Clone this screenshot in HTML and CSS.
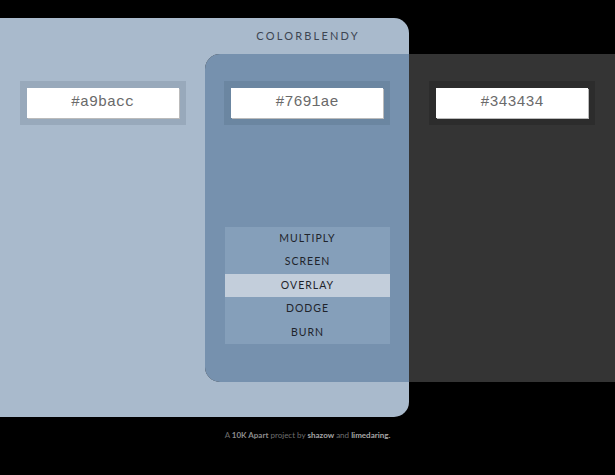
FILE: index.html
```html
<!DOCTYPE html>
<html lang="en">
<head>
    <meta charset="UTF-8">
    <title>ColorBlendy</title>
    <link rel="stylesheet" href="styles.css">
</head>
<body>
    <div class="stage">
        <div class="square light"></div>
        <div class="square dark"></div>
        <div class="square mix">
            <ul class="modes">
                <li>Multiply</li>
                <li>Screen</li>
                <li class="active">Overlay</li>
                <li>Dodge</li>
                <li>Burn</li>
            </ul>
        </div>

        <h1 class="title">ColorBlendy</h1>

        <div class="swatch swatch-light"><div class="code">#a9bacc</div></div>
        <div class="swatch swatch-mix"><div class="code">#7691ae</div></div>
        <div class="swatch swatch-dark"><div class="code">#343434</div></div>
    </div>

    <p class="footer">
        A <b>10K Apart</b> project by <b class="name">shazow</b> and <b class="name">limedaring.</b>
    </p>
</body>
</html>
```

FILE: styles.css
```css
body {
    margin: 0;
    background: #000;
    font-family: Lato, "Open Sans", sans-serif;
}
.stage {
    display: grid;
    grid-template-columns: 205px 204px 206px;
    grid-template-rows: 18px 36px 328px 35px;
}
.square {
    grid-row: 3;
}
.light {
    grid-column: 1 / 3;
    grid-row: 2 / 5;
    background: #a9bacc;
    border-radius: 0 15px 15px 0;
}
.dark {
    grid-column: 2 / 4;
    background: #343434;
    border-radius: 15px 0 0 15px;
}
.mix {
    grid-column: 2;
    background: #7691ae;
    border-radius: 15px 0 0 15px;
    padding-top: 173px;
}
.title {
    grid-column: 2;
    grid-row: 2;
    margin: 0;
    text-align: center;
    font-size: 11px;
    font-weight: normal;
    letter-spacing: 2.2px;
    text-transform: uppercase;
    color: #3d4552;
    line-height: 36px;
    padding-left: 2px;
}
.swatch {
    grid-row: 3;
    align-self: start;
    justify-self: center;
    margin-top: 27px;
    padding: 7px;
    width: 152px;
}
.swatch-light {
    grid-column: 1;
    background: #98a9bb;
}
.swatch-mix {
    grid-column: 2;
    background: #6b86a1;
}
.swatch-dark {
    grid-column: 3;
    background: #2c2c2c;
}
.code {
    background: #fff;
    height: 30px;
    line-height: 30px;
    text-align: center;
    font-family: "Liberation Mono", monospace;
    font-size: 15px;
    color: #6a6a6a;
    box-shadow: 1px 1px 0 #bbb;
}
.modes {
    list-style: none;
    margin: 0 0 0 20px;
    padding: 0;
    width: 165px;
    background: #859fba;
}
.modes li {
    height: 23.4px;
    line-height: 23.4px;
    text-align: center;
    text-transform: uppercase;
    font-size: 10.5px;
    letter-spacing: 1px;
    color: #1f242b;
}
.modes li.active {
    background: #c3cedb;
}
.footer {
    margin: 13px 0 0;
    width: 615px;
    text-align: center;
    font-size: 8px;
    color: #6e6e6e;
}
.footer b {
    color: #8d8d8d;
}
.footer .name {
    color: #a6a6a6;
}
```
